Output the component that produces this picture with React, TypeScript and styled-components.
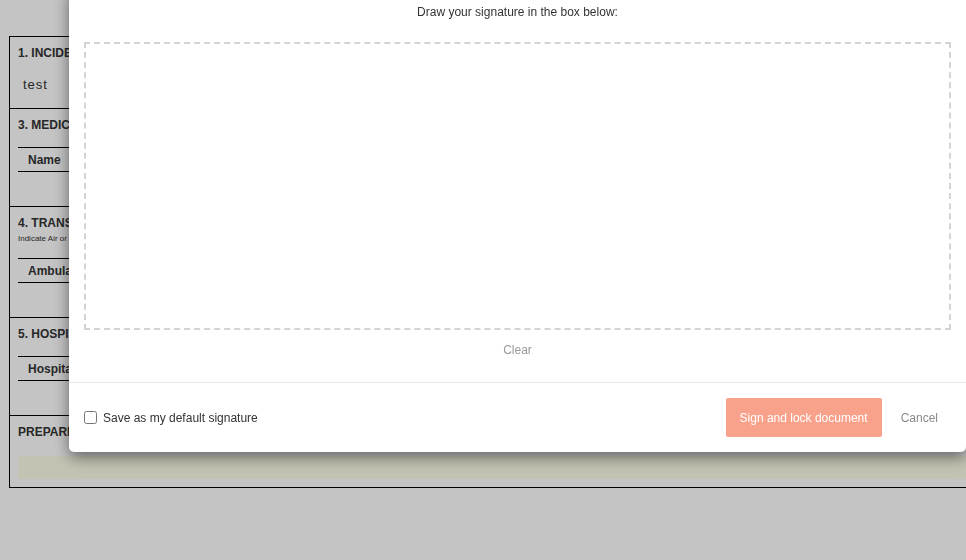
import { createGlobalStyle, styled } from "styled-components";

const GlobalStyle = createGlobalStyle`
    html, body {
        margin: 0;
        padding: 0;
        width: 966px;
        height: 560px;
        overflow: hidden;
        background: #ffffff;
        font-family: "Liberation Sans", Arial, sans-serif;
    }
`;

const Page = styled.div`
    width: 966px;
    height: 560px;
    overflow: hidden;
    padding: 36px 0 0 9px;
    box-sizing: border-box;
`;

const Document = styled.div`
    width: 1200px;
    border: 1px solid #000;
    background: #fff;
    color: #333;
`;

const Section = styled.div`
    padding: 8px 8px 0 8px;
    border-bottom: 1px solid #000;
    &:last-child {
        border-bottom: none;
        padding-bottom: 8px;
    }
`;

const SectionTitle = styled.div`
    font-size: 12px;
    line-height: 16px;
    font-weight: 700;
`;

const Hint = styled.div`
    font-size: 8px;
    line-height: 10px;
    margin-top: 3px;
    color: #333;
`;

const Value = styled.div`
    font-size: 13px;
    line-height: 16px;
    letter-spacing: 1px;
    padding: 16px 5px 15px;
`;

const SubTable = styled.div`
    margin-top: 14px;
`;

const HeaderRow = styled.div`
    border-top: 1px solid #000;
    border-bottom: 1px solid #000;
    height: 23px;
    display: flex;
    align-items: center;
    padding-left: 10px;
    font-size: 12px;
    font-weight: 700;
`;

const EmptyRow = styled.div`
    height: 34px;
`;

const Field = styled.div`
    margin-top: 16px;
    height: 23px;
    background: #fffde9;
`;

const Backdrop = styled.div`
    position: fixed;
    inset: 0;
    background: rgba(0, 0, 0, 0.231);
`;

const Modal = styled.div`
    position: fixed;
    left: 69px;
    top: -11px;
    width: 897px;
    background: #fff;
    border-radius: 0 0 5px 5px;
    box-shadow: 0 5px 15px rgba(0, 0, 0, 0.5);
    color: #333;
`;

const ModalBody = styled.div`
    padding: 15px 15px 24px;
    display: flex;
    flex-direction: column;
    align-items: center;
`;

const Prompt = styled.div`
    font-size: 12px;
    line-height: 16px;
    margin-bottom: 22px;
`;

const SignatureBox = styled.div`
    width: 100%;
    height: 288px;
    box-sizing: border-box;
    border: 2px dashed #d4d4d4;
`;

const ClearLink = styled.div`
    margin-top: 12px;
    font-size: 12px;
    line-height: 16px;
    color: #999;
    cursor: pointer;
`;

const Footer = styled.div`
    border-top: 1px solid #e8e8e8;
    padding: 15px;
    display: flex;
    align-items: center;
`;

const CheckLabel = styled.label`
    display: flex;
    align-items: center;
    gap: 6px;
    font-size: 12px;
    color: #333;
    flex: 1;
    input {
        margin: 0;
        width: 13px;
        height: 13px;
    }
`;

const PrimaryButton = styled.button`
    height: 39px;
    padding: 0 14px;
    border: none;
    border-radius: 2px;
    background: #f8a28c;
    color: #fff;
    font-family: inherit;
    font-size: 12px;
    cursor: pointer;
`;

const CancelButton = styled.button`
    margin-left: 6px;
    padding: 0 13px;
    height: 39px;
    border: none;
    background: none;
    color: #888;
    font-family: inherit;
    font-size: 12px;
    cursor: pointer;
`;

const tables = [
    { title: "3. MEDICAL", header: "Name" },
    { title: "4. TRANSPORT", hint: "Indicate Air or Ground transport", header: "Ambulance" },
    { title: "5. HOSPITALS", header: "Hospital" },
];

export default function App() {
    return (
        <>
            <GlobalStyle />
            <Page>
                <Document>
                    <Section>
                        <SectionTitle>1. INCIDENT NAME</SectionTitle>
                        <Value>test</Value>
                    </Section>
                    {tables.map((t) => (
                        <Section key={t.title}>
                            <SectionTitle>{t.title}</SectionTitle>
                            {t.hint ? <Hint>{t.hint}</Hint> : null}
                            <SubTable>
                                <HeaderRow>{t.header}</HeaderRow>
                                <EmptyRow />
                            </SubTable>
                        </Section>
                    ))}
                    <Section>
                        <SectionTitle>PREPARED BY</SectionTitle>
                        <Field />
                    </Section>
                </Document>
            </Page>
            <Backdrop />
            <Modal>
                <ModalBody>
                    <Prompt>Draw your signature in the box below:</Prompt>
                    <SignatureBox />
                    <ClearLink>Clear</ClearLink>
                </ModalBody>
                <Footer>
                    <CheckLabel>
                        <input type="checkbox" />
                        Save as my default signature
                    </CheckLabel>
                    <PrimaryButton>Sign and lock document</PrimaryButton>
                    <CancelButton>Cancel</CancelButton>
                </Footer>
            </Modal>
        </>
    );
}
